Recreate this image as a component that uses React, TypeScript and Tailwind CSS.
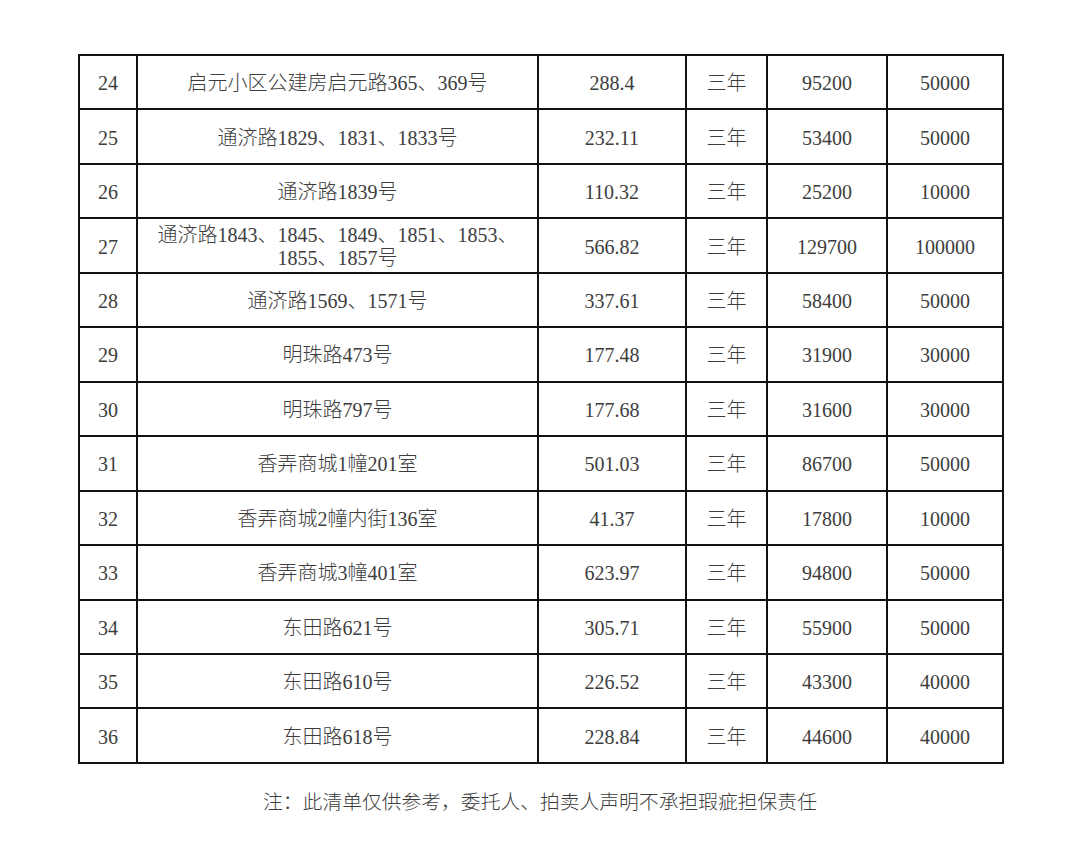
import React from "react";

type Row = { no: string; addr: React.ReactNode; area: string; term: string; rent: string; dep: string };

const rows: Row[] = [
  { no: "24", addr: "启元小区公建房启元路365、369号", area: "288.4", term: "三年", rent: "95200", dep: "50000" },
  { no: "25", addr: "通济路1829、1831、1833号", area: "232.11", term: "三年", rent: "53400", dep: "50000" },
  { no: "26", addr: "通济路1839号", area: "110.32", term: "三年", rent: "25200", dep: "10000" },
  {
    no: "27",
    addr: (
      <>
        通济路1843、1845、1849、1851、1853、
        <br />
        1855、1857号
      </>
    ),
    area: "566.82",
    term: "三年",
    rent: "129700",
    dep: "100000",
  },
  { no: "28", addr: "通济路1569、1571号", area: "337.61", term: "三年", rent: "58400", dep: "50000" },
  { no: "29", addr: "明珠路473号", area: "177.48", term: "三年", rent: "31900", dep: "30000" },
  { no: "30", addr: "明珠路797号", area: "177.68", term: "三年", rent: "31600", dep: "30000" },
  { no: "31", addr: "香弄商城1幢201室", area: "501.03", term: "三年", rent: "86700", dep: "50000" },
  { no: "32", addr: "香弄商城2幢内街136室", area: "41.37", term: "三年", rent: "17800", dep: "10000" },
  { no: "33", addr: "香弄商城3幢401室", area: "623.97", term: "三年", rent: "94800", dep: "50000" },
  { no: "34", addr: "东田路621号", area: "305.71", term: "三年", rent: "55900", dep: "50000" },
  { no: "35", addr: "东田路610号", area: "226.52", term: "三年", rent: "43300", dep: "40000" },
  { no: "36", addr: "东田路618号", area: "228.84", term: "三年", rent: "44600", dep: "40000" },
];

const cell =
  "h-[54.46px] pt-[3px] border-r-2 border-b-2 border-[#111] flex items-center justify-center text-center";

export default function App() {
  return (
    <div
      className="w-[1080px] h-[846px] bg-white text-[#3d3d3d] text-[20px] leading-[23px] font-light"
      style={{ fontFamily: '"Liberation Serif", "Noto Sans CJK SC", serif' }}
    >
      <div className="pt-[54px] pl-[78px]">
        <div className="w-[926px] border-l-2 border-t-2 border-[#111] grid grid-cols-[58px_401px_148px_81px_120px_116px]">
          {rows.map((r) => (
            <React.Fragment key={r.no}>
              <div className={cell}>{r.no}</div>
              <div className={cell}>
                <span>{r.addr}</span>
              </div>
              <div className={cell}>{r.area}</div>
              <div className={cell}>{r.term}</div>
              <div className={cell}>{r.rent}</div>
              <div className={cell}>{r.dep}</div>
            </React.Fragment>
          ))}
        </div>
      </div>
      <div className="mt-[27px] text-center text-[19.8px]">
        注：此清单仅供参考，委托人、拍卖人声明不承担瑕疵担保责任
      </div>
    </div>
  );
}
